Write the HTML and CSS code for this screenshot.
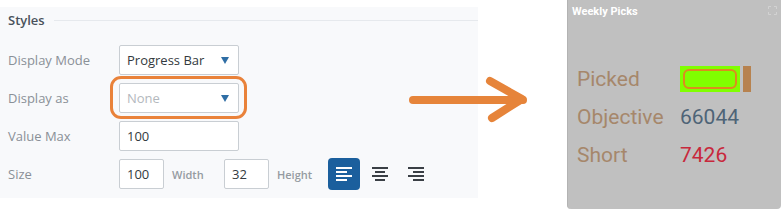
FILE: index.html
```html
<!DOCTYPE html>
<html>
<head>
  <link rel="stylesheet" href="styles.css">
</head>
<body>
  <div class="page">
    <div class="panel">
      <div class="heading">
        <span>Styles</span>
        <div class="rule"></div>
      </div>

      <div class="row">
        <label>Display Mode</label>
        <div class="select">
          <span>Progress Bar</span>
          <span class="caret"></span>
        </div>
      </div>

      <div class="row row-wide">
        <label>Display as</label>
        <div class="select select-empty highlight">
          <span>None</span>
          <span class="caret"></span>
        </div>
      </div>

      <div class="row">
        <label>Value Max</label>
        <div class="field">100</div>
      </div>

      <div class="row">
        <label>Size</label>
        <div class="field field-small">100</div>
        <span class="unit">Width</span>
        <div class="field field-small">32</div>
        <span class="unit">Height</span>
        <div class="aligns">
          <button class="align active">
            <svg width="16" height="14" viewBox="0 0 16 14"><path d="M0 1h16M0 5h11M0 9h16M0 13h11" stroke="#fff" stroke-width="2"/></svg>
          </button>
          <button class="align">
            <svg width="16" height="14" viewBox="0 0 16 14"><path d="M0 1h16M3 5h10M0 9h16M3 13h10" stroke="#3a3f45" stroke-width="2"/></svg>
          </button>
          <button class="align">
            <svg width="16" height="14" viewBox="0 0 16 14"><path d="M0 1h16M5 5h11M0 9h16M5 13h11" stroke="#3a3f45" stroke-width="2"/></svg>
          </button>
        </div>
      </div>
    </div>

    <div class="widget">
      <div class="widget-title">Weekly Picks</div>
      <svg class="expand" width="9" height="9" viewBox="0 0 9 9"><path d="M0.5 3V0.5H3M6 0.5H8.5V3M8.5 6V8.5H6M3 8.5H0.5V6" fill="none" stroke="#d2d2d2" stroke-width="1"/></svg>
      <div class="stats">
        <div class="stat">
          <span class="stat-label">Picked</span>
          <span class="bar">
            <span class="bar-fill"><span class="bar-ring"></span></span>
            <span class="bar-end"></span>
          </span>
        </div>
        <div class="stat">
          <span class="stat-label">Objective</span>
          <span class="stat-value">66044</span>
        </div>
        <div class="stat">
          <span class="stat-label">Short</span>
          <span class="stat-value short">7426</span>
        </div>
      </div>
    </div>

    <svg class="arrow" width="130" height="60" viewBox="0 0 130 60">
      <path d="M4 30H114" stroke="#e6843a" stroke-width="8" stroke-linecap="round"/>
      <path d="M81 11L113 29L83 48" fill="none" stroke="#e6843a" stroke-width="8" stroke-linecap="round" stroke-linejoin="round"/>
    </svg>
  </div>
</body>
</html>
```

FILE: styles.css
```css
body {
  margin: 0;
  background-color: #ffffff;
  font-family: "Open Sans", "Liberation Sans", sans-serif;
}

.page {
  position: relative;
  display: flex;
  align-items: flex-start;
  width: 781px;
  height: 212px;
}

.panel {
  width: 478px;
  height: 191px;
  margin-top: 7px;
  padding: 2px 0 0 8px;
  box-sizing: border-box;
  background-color: #f8f9fb;
}

.heading {
  display: flex;
  align-items: center;
  height: 22px;
  margin-bottom: 14px;
  font-size: 13px;
  font-weight: 600;
  color: #4a525b;
}

.heading .rule {
  flex: 1;
  height: 1px;
  margin-left: 9px;
  background-color: #e6e9ed;
}

.row {
  display: flex;
  align-items: center;
  height: 30px;
  margin-bottom: 8px;
}

.row-wide {
  margin-top: 2px;
}

.row label {
  width: 111px;
  font-size: 13px;
  color: #8a9097;
}

.select,
.field {
  display: flex;
  align-items: center;
  justify-content: space-between;
  width: 120px;
  height: 30px;
  padding: 0 9px 0 7px;
  box-sizing: border-box;
  border: 1px solid #c9ced3;
  border-radius: 2px;
  background-color: #ffffff;
  font-size: 13px;
  color: #333a40;
}

.select-empty {
  color: #b3b8bd;
}

.caret {
  width: 0;
  height: 0;
  border-left: 4px solid transparent;
  border-right: 4px solid transparent;
  border-top: 7px solid #2f6ea5;
}

.highlight {
  position: relative;
}

.highlight::after {
  content: "";
  position: absolute;
  left: -10px;
  top: -8px;
  width: 131px;
  height: 37px;
  border: 3px solid #e9823a;
  border-radius: 11px;
}

.field-small {
  width: 45px;
}

.unit {
  width: 60px;
  padding-left: 8px;
  box-sizing: border-box;
  font-size: 11px;
  font-weight: 600;
  color: #959ba1;
}

.aligns {
  display: flex;
  gap: 4px;
  margin-left: -1px;
}

.align {
  display: flex;
  align-items: center;
  justify-content: center;
  width: 32px;
  height: 32px;
  padding: 0;
  border: none;
  border-radius: 4px;
  background: none;
}

.align.active {
  background-color: #1b5f9d;
}

.widget {
  position: relative;
  width: 214px;
  height: 209px;
  margin-left: 89px;
  box-sizing: border-box;
  border-left: 1px solid #b3b3b3;
  border-radius: 0 0 4px 4px;
  background-color: #c0c0c0;
  font-family: Roboto, "Liberation Sans", sans-serif;
}

.widget-title {
  padding: 5px 0 0 4px;
  font-size: 11px;
  font-weight: 700;
  color: #ffffff;
}

.expand {
  position: absolute;
  top: 6px;
  right: 4px;
}

.stats {
  padding: 42px 0 0 9px;
}

.stat {
  display: flex;
  align-items: center;
  height: 38px;
  font-size: 21px;
}

.stat-label {
  width: 103px;
  color: #a6876b;
}

.stat-value {
  color: #4e6477;
}

.stat-value.short {
  color: #c8283c;
}

.bar {
  display: flex;
  height: 26px;
}

.bar-fill {
  display: flex;
  width: 60px;
  padding: 3px;
  box-sizing: border-box;
  background-color: #80ff00;
}

.bar-ring {
  flex: 1;
  border: 2px solid #de8a20;
  border-radius: 6px;
}

.bar-end {
  width: 8px;
  margin-left: 3px;
  background-color: #b7824f;
}

.arrow {
  position: absolute;
  left: 409px;
  top: 70px;
}
```
